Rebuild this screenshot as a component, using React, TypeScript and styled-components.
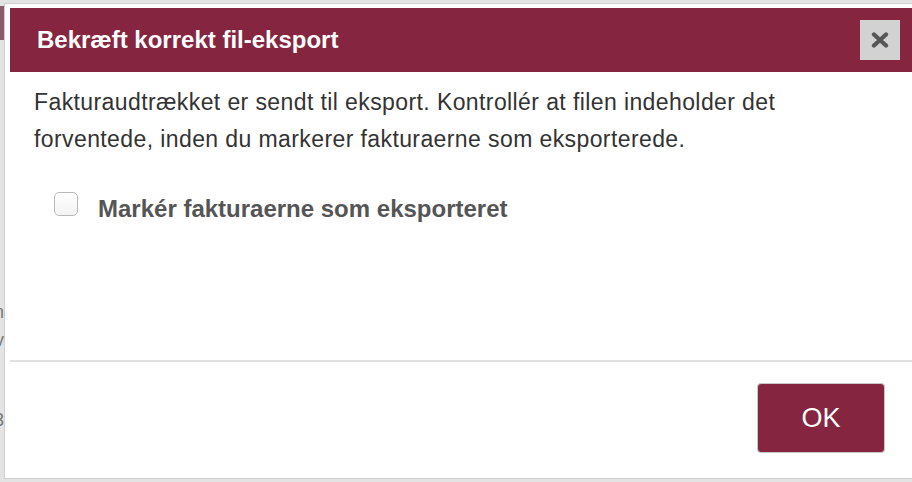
import styled, { createGlobalStyle } from "styled-components";

const GlobalStyle = createGlobalStyle`
  html, body {
    margin: 0;
    padding: 0;
    background: #e3e3e3;
    overflow: hidden;
  }
  body {
    font-family: "Liberation Sans", Arial, Helvetica, sans-serif;
  }
`;

const Page = styled.div`
  display: flex;
  width: 912px;
  height: 482px;
  overflow: hidden;
  padding-top: 3px;
  box-sizing: border-box;
`;

const Backdrop = styled.div`
  width: 4px;
  flex: none;
  overflow: hidden;
  display: flex;
  flex-direction: column;
  align-items: flex-end;
`;

const BackdropBlock = styled.div`
  width: 4px;
  height: 34px;
  margin-top: 3px;
  background: #8c5b6b;
`;

const BackdropGlyph = styled.span<{ $top: number }>`
  margin-top: ${(p) => p.$top}px;
  font-size: 18px;
  line-height: 20px;
  color: #777;
  white-space: nowrap;
`;

const Dialog = styled.div`
  width: 914px;
  height: 476px;
  flex: none;
  box-sizing: border-box;
  border: 1px solid #cfcfcf;
  padding: 4px 5px;
  background: #fff;
  display: flex;
  flex-direction: column;
`;

const TitleBar = styled.div`
  height: 64px;
  background: #852540;
  display: flex;
  align-items: center;
  justify-content: space-between;
  padding: 0 12px 0 27px;
`;

const Title = styled.span`
  color: #fff;
  font-weight: bold;
  font-size: 24px;
`;

const CloseButton = styled.button`
  width: 40px;
  height: 40px;
  border: none;
  background: #d2d2d2;
  padding: 0;
  display: flex;
  align-items: center;
  justify-content: center;
  cursor: pointer;
`;

const Content = styled.div`
  height: 288px;
  box-sizing: border-box;
  padding: 12px 24px 0 24px;
`;

const Message = styled.p`
  margin: 0;
  font-size: 23px;
  letter-spacing: 0.4px;
  line-height: 37px;
  color: #333;
  width: 800px;
`;

const CheckRow = styled.label`
  display: flex;
  align-items: flex-start;
  gap: 20px;
  margin-top: 34px;
  padding-left: 20px;
`;

const Box = styled.span`
  width: 24px;
  height: 24px;
  box-sizing: border-box;
  border: 1px solid #b9b9b9;
  border-radius: 5px;
  background: linear-gradient(#fff, #f3f3f3);
  flex: none;
`;

const CheckLabel = styled.span`
  margin-top: 5px;
  font-size: 24px;
  line-height: 24px;
  font-weight: bold;
  color: #555;
`;

const ButtonPane = styled.div`
  border-top: 2px solid #e0e0e0;
  display: flex;
  justify-content: flex-end;
  padding: 21px 27px 0 0;
`;

const OkButton = styled.button`
  width: 128px;
  height: 70px;
  box-sizing: border-box;
  background: #852540;
  border: 1px solid #c8c8c8;
  border-radius: 4px;
  color: #fff;
  font-family: "Liberation Sans", Arial, sans-serif;
  font-size: 27px;
  cursor: pointer;
`;

export default function App() {
  return (
    <>
      <GlobalStyle />
      <Page>
        <Backdrop>
          <BackdropBlock />
          <BackdropGlyph $top={262}>n</BackdropGlyph>
          <BackdropGlyph $top={8}>v</BackdropGlyph>
          <BackdropGlyph $top={60}>3</BackdropGlyph>
        </Backdrop>
        <Dialog>
          <TitleBar>
            <Title>Bekræft korrekt fil-eksport</Title>
            <CloseButton aria-label="Luk">
              <svg width="18" height="16" viewBox="0 0 18 16">
                <path
                  d="M3 2.5 L15 13.5 M15 2.5 L3 13.5"
                  stroke="#555"
                  strokeWidth="4.2"
                  strokeLinecap="round"
                />
              </svg>
            </CloseButton>
          </TitleBar>
          <Content>
            <Message>
              Fakturaudtrækket er sendt til eksport. Kontrollér at filen
              indeholder det forventede, inden du markerer fakturaerne som
              eksporterede.
            </Message>
            <CheckRow>
              <Box />
              <CheckLabel>Markér fakturaerne som eksporteret</CheckLabel>
            </CheckRow>
          </Content>
          <ButtonPane>
            <OkButton>OK</OkButton>
          </ButtonPane>
        </Dialog>
      </Page>
    </>
  );
}
